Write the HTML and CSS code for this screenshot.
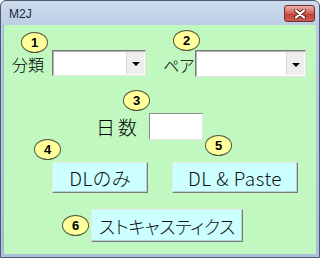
FILE: index.html
```html
<!DOCTYPE html>
<html lang="ja">
<head>
    <meta charset="UTF-8">
    <title>M2J</title>
    <link rel="stylesheet" href="styles.css">
</head>
<body>
    <div class="window">
        <div class="titlebar">
            <span class="title">M2J</span>
            <span class="close">
                <svg width="14" height="10" viewBox="0 0 14 10">
                    <path d="M3 1.5 L11 8.5 M11 1.5 L3 8.5" stroke="#5a2a26" stroke-width="4" stroke-linecap="round"/>
                    <path d="M3 1.5 L11 8.5 M11 1.5 L3 8.5" stroke="#ffffff" stroke-width="2.2" stroke-linecap="round"/>
                </svg>
            </span>
        </div>
        <div class="client">
            <div class="row row-fields">
                <div class="field field-kind">
                    <span class="badge">1</span>
                    <div class="field-line">
                        <label class="lbl lbl-kind">分類</label>
                        <div class="combo combo-kind"><span class="combo-btn"></span></div>
                    </div>
                </div>
                <div class="field field-pair">
                    <span class="badge">2</span>
                    <div class="field-line">
                        <label class="lbl lbl-pair">ペア</label>
                        <div class="combo combo-pair"><span class="combo-btn"></span></div>
                    </div>
                </div>
            </div>

            <div class="row row-days">
                <div class="field field-days">
                    <span class="badge">3</span>
                    <div class="field-line">
                        <label class="lbl lbl-days">日数</label>
                        <input class="textbox" type="text">
                    </div>
                </div>
            </div>

            <div class="row row-buttons">
                <div class="btn-col col-dl">
                    <span class="badge">4</span>
                    <button class="btn btn-dl">DLのみ</button>
                </div>
                <div class="btn-col col-paste">
                    <span class="badge">5</span>
                    <button class="btn btn-paste">DL &amp; Paste</button>
                </div>
            </div>

            <div class="row row-last">
                <span class="badge">6</span>
                <button class="btn btn-stoch">ストキャスティクス</button>
            </div>
        </div>
    </div>
</body>
</html>
```

FILE: styles.css
```css
body {
    margin: 0;
    font-family: 'Liberation Sans', 'Noto Sans CJK JP', sans-serif;
}
.window {
    width: 320px;
    height: 258px;
    box-sizing: border-box;
    border: 1px solid #4d5a6b;
    border-radius: 6px 6px 0 0;
    background: linear-gradient(#ccdbed, #b8cbe3 30px, #a9c1db);
    padding: 0 3px 3px 2px;
    display: flex;
    flex-direction: column;
}
.titlebar {
    height: 24px;
    display: flex;
    align-items: flex-start;
    justify-content: space-between;
}
.title {
    font-size: 12px;
    color: #1b2638;
    margin: 6px 0 0 6px;
}
.close {
    width: 29px;
    height: 15px;
    margin-top: 4px;
    margin-right: 1px;
    border: 1px solid #6e302c;
    border-radius: 3px;
    background: linear-gradient(#eab2a8, #d3685d 45%, #c0433a 55%, #cc5d52);
    display: flex;
    align-items: center;
    justify-content: center;
}
.client {
    flex: 1;
    background: #c0f8c0;
    border-left: 1px solid #9fb5cf;
    font-family: 'Noto Sans CJK JP', sans-serif;
    font-weight: 300;
    font-feature-settings: "palt";
    color: #000;
}
.row {
    display: flex;
    align-items: flex-start;
}
.badge {
    width: 25px;
    height: 19px;
    border: 1.5px solid #55553a;
    border-radius: 50%;
    background: #ffff9c;
    font: bold 13px 'Liberation Sans', sans-serif;
    display: flex;
    align-items: center;
    justify-content: center;
    flex-shrink: 0;
}
.field {
    display: flex;
    flex-direction: column;
    align-items: flex-start;
}
.field-line {
    display: flex;
    align-items: center;
}
.lbl {
    font-size: 16px;
    line-height: 1;
}

.row-fields {
    padding-top: 7px;
}
.field-kind {
    margin-left: 8px;
}
.field-kind .badge {
    margin-left: 9px;
}
.field-kind .field-line {
    margin-top: -3px;
}
.lbl-kind {
    width: 32px;
    margin-top: 2px;
}
.combo {
    height: 26px;
    box-sizing: border-box;
    background: #fff;
    border: 1px solid;
    border-color: #7a7a7a #e3e3e3 #e3e3e3 #7a7a7a;
    box-shadow: inset 1px 1px 0 #b4b4b4;
    display: flex;
    justify-content: flex-end;
}
.combo-kind {
    width: 94px;
    margin-left: 8px;
}
.field-pair {
    margin-left: 17px;
    margin-top: -2px;
}
.field-pair .badge {
    margin-left: 10px;
}
.field-pair .field-line {
    margin-top: -1px;
}
.lbl-pair {
    width: 32px;
    margin-top: 3px;
}
.combo-pair {
    width: 111px;
    height: 27px;
}
.combo-btn {
    width: 17px;
    margin: 1px;
    background: #eeeeee;
    border-left: 1px solid #d6d6d6;
    display: flex;
    align-items: center;
    justify-content: center;
}
.combo-btn::after {
    content: "";
    border-left: 4px solid transparent;
    border-right: 4px solid transparent;
    border-top: 4px solid #000;
    margin-top: 2px;
}

.row-days {
    margin-top: 13px;
}
.field-days {
    margin-left: 92px;
}
.field-days .badge {
    margin-left: 27px;
}
.field-days .field-line {
    margin-top: 2px;
}
.lbl-days {
    font-size: 19px;
    letter-spacing: 3px;
    width: 53px;
}
.textbox {
    width: 54px;
    height: 27px;
    box-sizing: border-box;
    margin: 0;
    background: #fff;
    border: 1px solid;
    border-color: #8a8a8a #e4e4e4 #e4e4e4 #8a8a8a;
}

.btn-col {
    display: flex;
    flex-direction: column;
    align-items: flex-start;
}
.btn {
    font-family: 'Noto Sans CJK JP', sans-serif;
    font-weight: 300;
    font-feature-settings: "palt";
    font-size: 19px;
    letter-spacing: 0.5px;
    color: #111;
    background: #ccffff;
    border: 1px solid;
    border-color: #e8e8e8 #7c7c7c #7c7c7c #e8e8e8;
    box-shadow: inset -1px -1px 0 #b5d2d2;
    padding: 0;
    height: 31px;
    line-height: 1;
}
.col-dl {
    margin-left: 30px;
}
.col-dl .badge {
    margin-top: -1px;
}
.btn-dl {
    width: 96px;
    margin-left: 18px;
    margin-top: 2px;
}
.col-paste {
    margin-left: 24px;
}
.col-paste .badge {
    margin-top: -5px;
    margin-left: 33px;
}
.btn-paste {
    width: 126px;
    margin-top: 6px;
}
.row-last {
    align-items: center;
    margin-top: 16px;
}
.row-last .badge {
    margin-left: 58px;
}
.btn-stoch {
    width: 152px;
    height: 33px;
    margin-left: 2px;
    font-size: 18px;
    letter-spacing: -0.3px;
}
```
